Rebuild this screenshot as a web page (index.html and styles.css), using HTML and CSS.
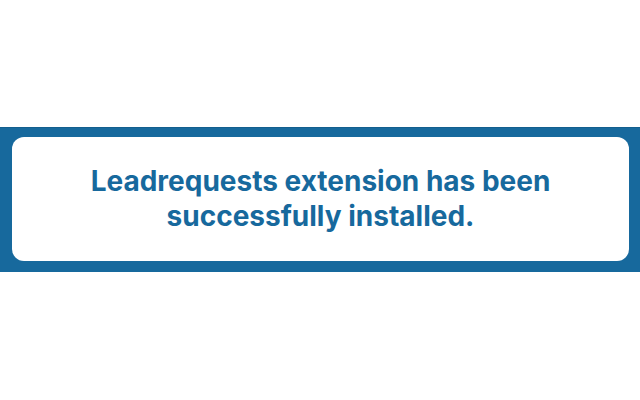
FILE: index.html
```html
<!DOCTYPE html>
<html>
<head>
<meta charset="utf-8">
<link rel="stylesheet" href="styles.css">
</head>
<body>
<div class="band">
  <div class="card">
    <p class="msg">Leadrequests extension has been<br>successfully installed.</p>
  </div>
</div>
</body>
</html>
```
FILE: styles.css
```css
html, body {
  margin: 0;
  padding: 0;
  background: #ffffff;
}
body {
  padding-top: 127px;
  font-family: Inter, "Noto Sans", sans-serif;
}
.band {
  background: #17699d;
  border-top: 1px solid #145f8e;
  padding: 9px 11px 11px 12px;
}
.card {
  background: #ffffff;
  border-radius: 12px;
  height: 124px;
  display: flex;
  align-items: center;
  justify-content: center;
}
.msg {
  margin: 0;
  color: #17699d;
  font-weight: 700;
  font-size: 28px;
  line-height: 35px;
  text-align: center;
  letter-spacing: 0;
}
```
